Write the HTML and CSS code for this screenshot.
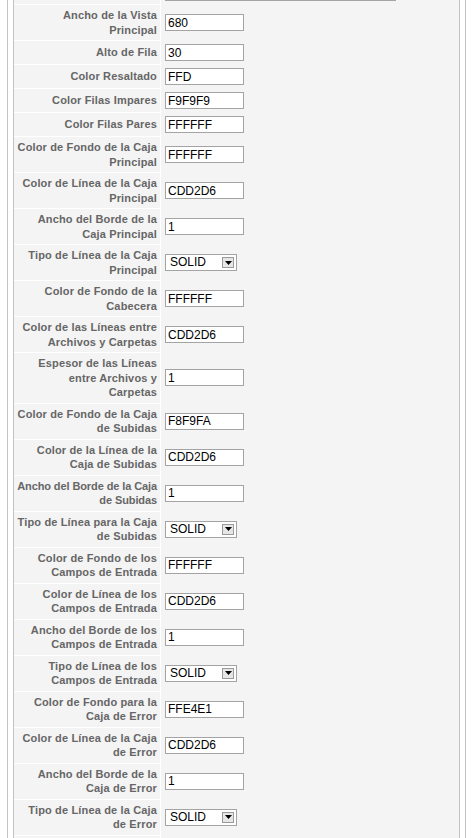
FILE: index.html
```html
<!DOCTYPE html>
<html lang="es">
<head>
<meta charset="utf-8">
<title>Configuración</title>
<link rel="stylesheet" href="styles.css">
</head>
<body>
<div class="frame">
  <div class="panel">
    <table class="settings">
      <tr><td class="label">&nbsp;</td><td class="value"><input class="field wide" type="text" value=""></td></tr>
      <tr><td class="label">Ancho de la Vista<br>Principal</td><td class="value"><input class="field" type="text" value="680"></td></tr>
      <tr><td class="label">Alto de Fila</td><td class="value"><input class="field" type="text" value="30"></td></tr>
      <tr><td class="label">Color Resaltado</td><td class="value"><input class="field" type="text" value="FFD"></td></tr>
      <tr><td class="label">Color Filas Impares</td><td class="value"><input class="field" type="text" value="F9F9F9"></td></tr>
      <tr><td class="label">Color Filas Pares</td><td class="value"><input class="field" type="text" value="FFFFFF"></td></tr>
      <tr><td class="label">Color de Fondo de la Caja<br>Principal</td><td class="value"><input class="field" type="text" value="FFFFFF"></td></tr>
      <tr><td class="label">Color de Línea de la Caja<br>Principal</td><td class="value"><input class="field" type="text" value="CDD2D6"></td></tr>
      <tr><td class="label">Ancho del Borde de la<br>Caja Principal</td><td class="value"><input class="field" type="text" value="1"></td></tr>
      <tr><td class="label">Tipo de Línea de la Caja<br>Principal</td><td class="value"><div class="select"><span class="select-text">SOLID</span><span class="select-btn"><svg width="7" height="4" viewBox="0 0 7 4"><path d="M0 0H7L3.5 4Z" fill="#000"/></svg></span></div></td></tr>
      <tr><td class="label">Color de Fondo de la<br>Cabecera</td><td class="value"><input class="field" type="text" value="FFFFFF"></td></tr>
      <tr><td class="label">Color de las Líneas entre<br>Archivos y Carpetas</td><td class="value"><input class="field" type="text" value="CDD2D6"></td></tr>
      <tr><td class="label">Espesor de las Líneas<br>entre Archivos y<br>Carpetas</td><td class="value"><input class="field" type="text" value="1"></td></tr>
      <tr><td class="label">Color de Fondo de la Caja<br>de Subidas</td><td class="value"><input class="field" type="text" value="F8F9FA"></td></tr>
      <tr><td class="label">Color de la Línea de la<br>Caja de Subidas</td><td class="value"><input class="field" type="text" value="CDD2D6"></td></tr>
      <tr><td class="label tight">Ancho del Borde de la Caja<br>de Subidas</td><td class="value"><input class="field" type="text" value="1"></td></tr>
      <tr><td class="label">Tipo de Línea para la Caja<br>de Subidas</td><td class="value"><div class="select"><span class="select-text">SOLID</span><span class="select-btn"><svg width="7" height="4" viewBox="0 0 7 4"><path d="M0 0H7L3.5 4Z" fill="#000"/></svg></span></div></td></tr>
      <tr><td class="label">Color de Fondo de los<br>Campos de Entrada</td><td class="value"><input class="field" type="text" value="FFFFFF"></td></tr>
      <tr><td class="label">Color de Línea de los<br>Campos de Entrada</td><td class="value"><input class="field" type="text" value="CDD2D6"></td></tr>
      <tr><td class="label">Ancho del Borde de los<br>Campos de Entrada</td><td class="value"><input class="field" type="text" value="1"></td></tr>
      <tr><td class="label">Tipo de Línea de los<br>Campos de Entrada</td><td class="value"><div class="select"><span class="select-text">SOLID</span><span class="select-btn"><svg width="7" height="4" viewBox="0 0 7 4"><path d="M0 0H7L3.5 4Z" fill="#000"/></svg></span></div></td></tr>
      <tr><td class="label">Color de Fondo para la<br>Caja de Error</td><td class="value"><input class="field" type="text" value="FFE4E1"></td></tr>
      <tr><td class="label">Color de Línea de la Caja<br>de Error</td><td class="value"><input class="field" type="text" value="CDD2D6"></td></tr>
      <tr><td class="label">Ancho del Borde de la<br>Caja de Error</td><td class="value"><input class="field" type="text" value="1"></td></tr>
      <tr><td class="label">Tipo de Línea de la Caja<br>de Error</td><td class="value"><div class="select"><span class="select-text">SOLID</span><span class="select-btn"><svg width="7" height="4" viewBox="0 0 7 4"><path d="M0 0H7L3.5 4Z" fill="#000"/></svg></span></div></td></tr>
      <tr><td class="label">&nbsp;</td><td class="value"><input class="field" type="text" value=""></td></tr>
    </table>
  </div>
</div>
</body>
</html>
```

FILE: styles.css
```css
html, body {
  margin: 0;
  padding: 0;
  background: #ffffff;
}

.frame {
  margin: -20px 0 0 7px;
  width: 447px;
  padding: 0 5px;
  border-left: 1px solid #c3c3c3;
  border-right: 1px solid #c3c3c3;
  background: #ffffff;
}

.panel {
  border: 1px solid #c3c3c3;
  background: #f4f4f4;
}

.settings {
  width: 100%;
  border-collapse: separate;
  border-spacing: 0;
  table-layout: fixed;
}

.label {
  width: 143px;
  padding: 3px 3px 3px 0;
  border-right: 1px solid #ffffff;
  border-bottom: 1px solid #ffffff;
  text-align: right;
  vertical-align: middle;
  font-family: "Liberation Sans", Arial, sans-serif;
  font-weight: bold;
  font-size: 11px;
  line-height: 14.5px;
  letter-spacing: 0.15px;
  color: #666666;
  white-space: nowrap;
  overflow: hidden;
}

.label.tight {
  letter-spacing: -0.1px;
}

.value {
  padding: 3px 4px;
  border-bottom: 1px solid transparent;
  vertical-align: middle;
}

.field {
  display: block;
  box-sizing: border-box;
  width: 79px;
  height: 17px;
  margin: 0;
  padding: 0 2px;
  border: 1px solid #a4a4a4;
  background: #ffffff;
  font-family: "Liberation Sans", Arial, sans-serif;
  font-size: 12px;
  color: #000000;
  outline: none;
}

.field.wide {
  width: 231px;
}

.select {
  box-sizing: border-box;
  width: 72px;
  height: 17px;
  border: 1px solid #a4a4a4;
  background: #ffffff;
  display: flex;
  align-items: center;
  justify-content: space-between;
  padding: 0 2px 0 4px;
  font-family: "Liberation Sans", Arial, sans-serif;
  font-size: 12px;
  color: #000000;
}

.select-text {
  line-height: 15px;
}

.select-btn {
  box-sizing: border-box;
  width: 12px;
  height: 11px;
  border: 1px solid #9a9a9a;
  background: #e6e6e6;
  display: flex;
  align-items: center;
  justify-content: center;
}

.select-btn svg {
  display: block;
}
```
